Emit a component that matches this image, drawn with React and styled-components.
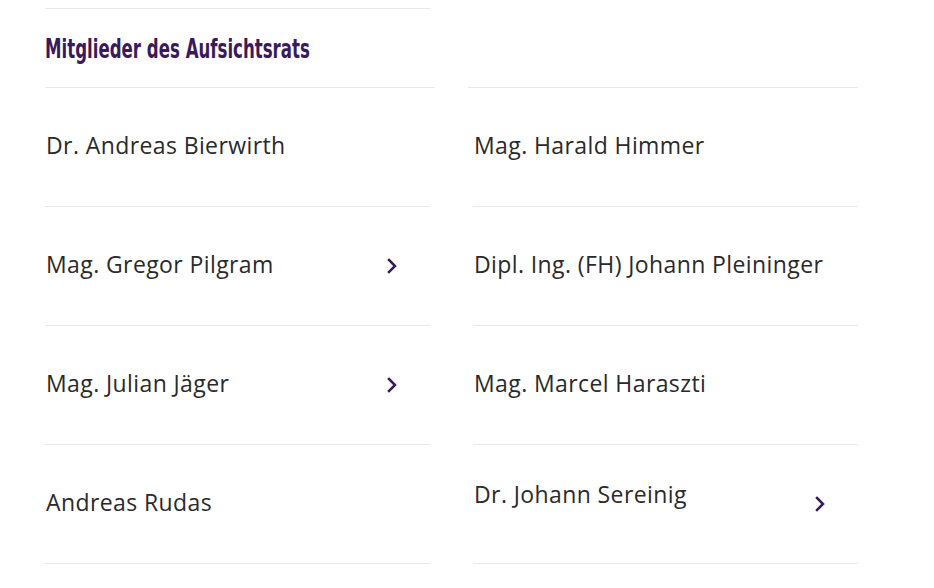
import React from "react";
import styled, { createGlobalStyle } from "styled-components";

const GlobalStyle = createGlobalStyle`
  body {
    margin: 0;
    background: #ffffff;
  }
`;

const Page = styled.div`
  display: flex;
  padding: 8px 0 0 45px;
  width: 934px;
  height: 588px;
  box-sizing: border-box;
  overflow: hidden;
`;

const Column = styled.div`
  display: flex;
  flex-direction: column;
  width: 385px;
  margin-left: ${(p) => p.offset || 0}px;
`;

const HeadBlock = styled.div`
  border-top: 1px solid #e8e8ea;
  width: 385px;
`;

const Heading = styled.div`
  height: 79px;
  box-sizing: border-box;
  padding-top: 27px;
  margin-right: -5px;
  border-bottom: 1px solid #e8e8ea;
`;

const HeadingText = styled.h2`
  margin: 0;
  display: inline-block;
  transform: scaleX(0.71);
  transform-origin: left center;
  white-space: nowrap;
  font-family: "DejaVu Sans", sans-serif;
  font-stretch: condensed;
  font-weight: 700;
  font-size: 26px;
  line-height: 26px;
  color: #3a1a5c;
`;

const HeadSpacer = styled.div`
  height: 79px;
  margin-left: -5px;
  border-bottom: 1px solid #e8e8ea;
`;

const Row = styled.div`
  display: flex;
  align-items: center;
  justify-content: space-between;
  height: 119px;
  box-sizing: border-box;
  padding: 0 32px 0 1px;
  border-bottom: 1px solid #e8e8ea;
`;

const Name = styled.span`
  font-family: "Open Sans", sans-serif;
  font-size: 23px;
  letter-spacing: 0.4px;
  white-space: nowrap;
  color: #2a2a2a;
  transform: translateY(${(p) => p.shift ?? -2}px);
`;

const Chevron = () => (
  <svg width="12" height="16" viewBox="0 0 12 16" fill="none">
    <path d="M3 2l6 6-6 6" stroke="#3a1a5c" strokeWidth="2.5" strokeLinecap="square" />
  </svg>
);

const left = [
  { name: "Dr. Andreas Bierwirth", link: false },
  { name: "Mag. Gregor Pilgram", link: true },
  { name: "Mag. Julian Jäger", link: true },
  { name: "Andreas Rudas", link: false },
];

const right = [
  { name: "Mag. Harald Himmer", link: false },
  { name: "Dipl. Ing. (FH) Johann Pleininger", link: false },
  { name: "Mag. Marcel Haraszti", link: false },
  { name: "Dr. Johann Sereinig", link: true, shift: -10 },
];

function Member({ item }) {
  return (
    <Row>
      <Name shift={item.shift}>{item.name}</Name>
      {item.link && <Chevron />}
    </Row>
  );
}

export default function App() {
  return (
    <>
      <GlobalStyle />
      <Page>
        <Column>
          <HeadBlock>
            <Heading>
              <HeadingText>Mitglieder des Aufsichtsrats</HeadingText>
            </Heading>
          </HeadBlock>
          {left.map((item) => (
            <Member key={item.name} item={item} />
          ))}
        </Column>
        <Column offset={43}>
          <HeadSpacer />
          {right.map((item) => (
            <Member key={item.name} item={item} />
          ))}
        </Column>
      </Page>
    </>
  );
}
